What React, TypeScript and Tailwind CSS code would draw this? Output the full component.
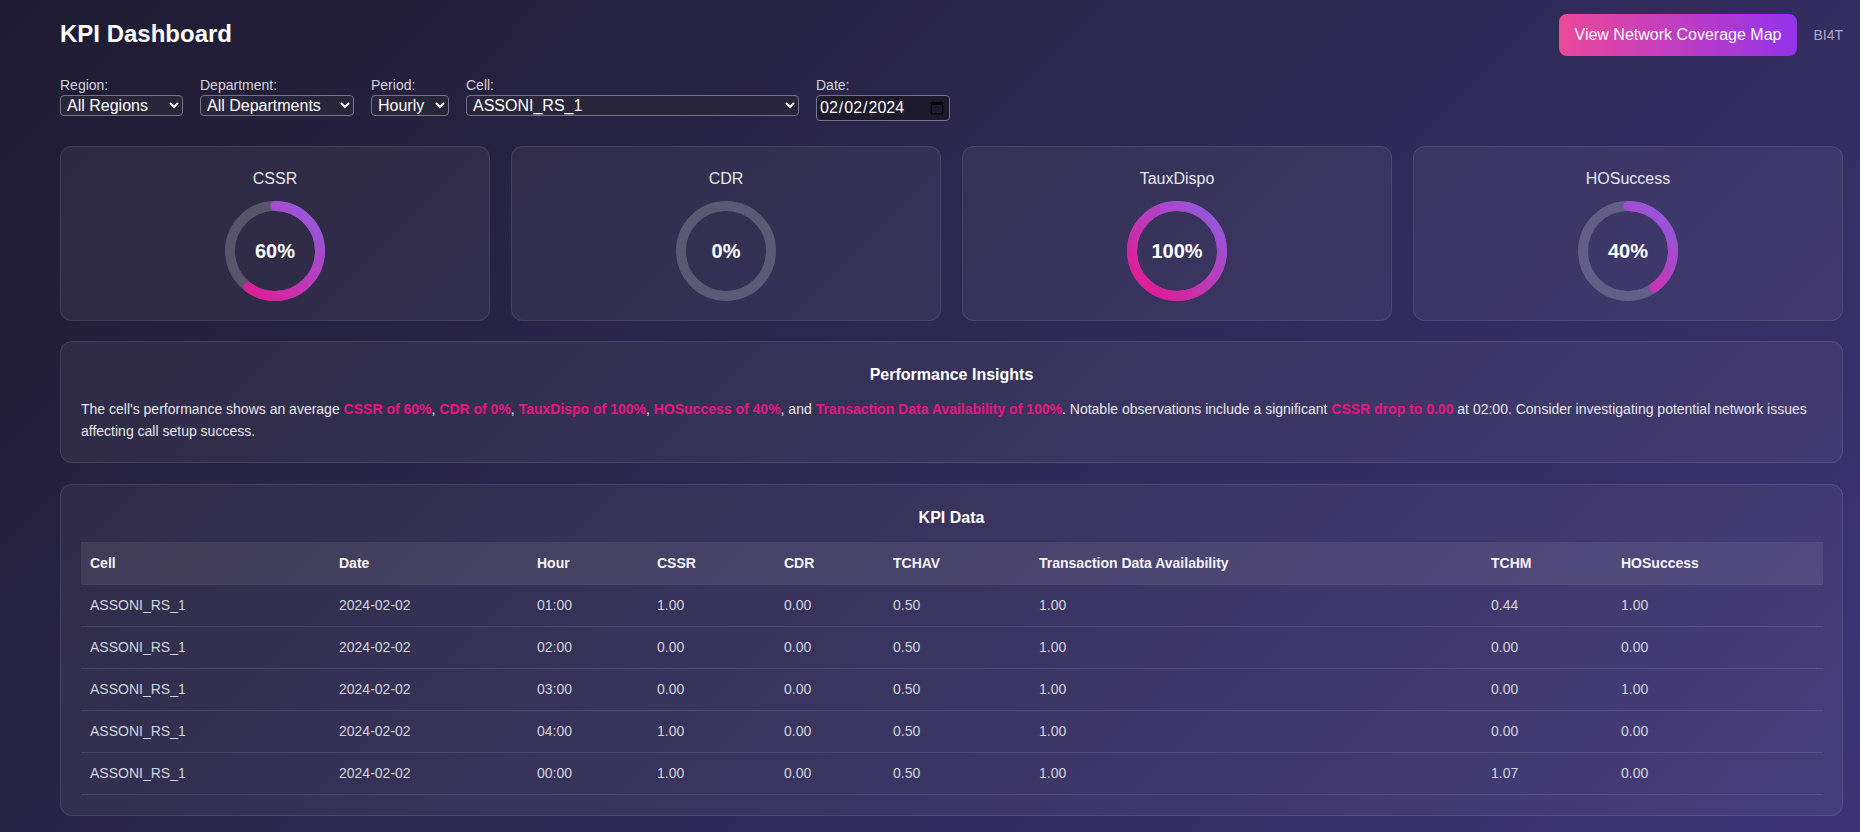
import { useState } from 'react';

const filters = [
  { label: 'Region:', value: 'All Regions', options: ['All Regions'], width: 'w-[123px]' },
  { label: 'Department:', value: 'All Departments', options: ['All Departments'], width: 'w-[154px]' },
  { label: 'Period:', value: 'Hourly', options: ['Hourly', 'Daily'], width: 'w-[78px]' },
  { label: 'Cell:', value: 'ASSONI_RS_1', options: ['ASSONI_RS_1'], width: 'w-[333px]' },
];

const gauges = [
  { name: 'CSSR', value: 60 },
  { name: 'CDR', value: 0 },
  { name: 'TauxDispo', value: 100 },
  { name: 'HOSuccess', value: 40 },
];

const columns = [
  { name: 'Cell', width: 'w-[249px]' },
  { name: 'Date', width: 'w-[198px]' },
  { name: 'Hour', width: 'w-[120px]' },
  { name: 'CSSR', width: 'w-[127px]' },
  { name: 'CDR', width: 'w-[109px]' },
  { name: 'TCHAV', width: 'w-[146px]' },
  { name: 'Transaction Data Availability', width: 'w-[452px]' },
  { name: 'TCHM', width: 'w-[130px]' },
  { name: 'HOSuccess', width: 'w-[211px]' },
];

const rows = [
  ['01:00', '1.00', '0.00', '0.50', '1.00', '0.44', '1.00'],
  ['02:00', '0.00', '0.00', '0.50', '1.00', '0.00', '0.00'],
  ['03:00', '0.00', '0.00', '0.50', '1.00', '0.00', '1.00'],
  ['04:00', '1.00', '0.00', '0.50', '1.00', '0.00', '0.00'],
  ['00:00', '1.00', '0.00', '0.50', '1.00', '1.07', '0.00'],
];

const Gauge = ({ name, value }: { name: string; value: number }) => {
  const r = 45;
  const c = 2 * Math.PI * r;
  const id = `grad-${name}`;

  return (
    <div className="h-[175px] rounded-xl border border-white/10 bg-white/[0.05] flex flex-col items-center pt-[23px]">
      <h3 className="text-base leading-[18px] text-gray-200">{name}</h3>
      <div className="relative mt-[13px] size-[100px]">
        <svg width="100" height="100" viewBox="0 0 100 100">
          <defs>
            <linearGradient id={id} x1="0%" y1="0%" x2="100%" y2="100%">
              <stop offset="0%" stopColor="#ec148a" />
              <stop offset="100%" stopColor="#8d5ee6" />
            </linearGradient>
          </defs>
          <circle cx="50" cy="50" r={r} fill="none" stroke="rgba(255,255,255,0.2)" strokeWidth="10" />
          {value > 0 && (
            <circle
              cx="50"
              cy="50"
              r={r}
              fill="none"
              stroke={`url(#${id})`}
              strokeWidth="10"
              strokeLinecap="round"
              strokeDasharray={`${(c * value) / 100} ${c}`}
              transform="rotate(-90 50 50)"
            />
          )}
        </svg>
        <div className="absolute inset-0 flex items-center justify-center text-xl font-bold">{value}%</div>
      </div>
    </div>
  );
};

const Hl = ({ children }: { children: React.ReactNode }) => (
  <span className="font-bold text-[#e8167f]">{children}</span>
);

export default function App() {
  const [date, setDate] = useState('2024-02-02');

  return (
    <div className="min-h-screen w-full bg-[linear-gradient(135deg,#1f1b31_0%,#2e2953_50%,#3d3376_100%)] font-['Liberation_Sans',Arial,sans-serif] text-white pl-[60px] pr-[17px] pt-[14px] pb-[16px]">
      <header className="h-[42px] flex items-center justify-between">
        <h1 className="text-2xl font-bold -mt-[2px]">KPI Dashboard</h1>
        <div className="flex items-center gap-4">
          <button className="h-[42px] px-4 rounded-lg text-base bg-[linear-gradient(to_right,#ec4899,#9333ea)]">
            View Network Coverage Map
          </button>
          <span className="text-sm text-[#aeaac4]">BI4T</span>
        </div>
      </header>

      <div className="mt-5 flex items-start gap-[17px]">
        {filters.map((f) => (
          <div key={f.label} className="flex flex-col">
            <label className="text-sm leading-[19px] text-gray-300">{f.label}</label>
            <select
              defaultValue={f.value}
              className={`${f.width} h-[21px] px-[2px] text-base rounded-[4px] border border-[#77738b] bg-[#29263b] text-white`}
            >
              {f.options.map((o) => (
                <option key={o}>{o}</option>
              ))}
            </select>
          </div>
        ))}
        <div className="flex flex-col">
          <label className="text-sm leading-[19px] text-gray-300">Date:</label>
          <input
            type="date"
            value={date}
            onChange={(e) => setDate(e.target.value)}
            className="w-[134px] h-[26px] px-[2px] text-base rounded-[4px] border border-[#77738b] bg-[#1d1a2b] text-white"
          />
        </div>
      </div>

      <div className="mt-[25px] grid grid-cols-4 gap-[21px]">
        {gauges.map((g) => (
          <Gauge key={g.name} {...g} />
        ))}
      </div>

      <section className="mt-[20px] rounded-xl border border-white/10 bg-white/[0.05] px-5 pt-[21px] pb-5">
        <h2 className="text-center text-base font-bold leading-6 mb-[11px]">Performance Insights</h2>
        <p className="text-sm leading-[22px] text-gray-200">
          The cell's performance shows an average <Hl>CSSR of 60%</Hl>, <Hl>CDR of 0%</Hl>, <Hl>TauxDispo of 100%</Hl>,{' '}
          <Hl>HOSuccess of 40%</Hl>, and <Hl>Transaction Data Availability of 100%</Hl>. Notable observations include a
          significant <Hl>CSSR drop to 0.00</Hl> at 02:00. Consider investigating potential network issues affecting
          call setup success.
        </p>
      </section>

      <section className="mt-[21px] rounded-xl border border-white/10 bg-white/[0.05] px-5 pt-[21px] pb-5">
        <h2 className="text-center text-base font-bold leading-6 mb-3">KPI Data</h2>
        <table className="w-full table-fixed text-sm">
          <thead>
            <tr className="h-[42px] bg-white/[0.08] border-b border-white/10">
              {columns.map((c) => (
                <th key={c.name} className={`${c.width} pl-[9px] text-left font-bold text-gray-100`}>
                  {c.name}
                </th>
              ))}
            </tr>
          </thead>
          <tbody>
            {rows.map((r) => (
              <tr key={r[0]} className="h-[42px] border-b border-white/10 text-gray-300">
                <td className="pl-[9px]">ASSONI_RS_1</td>
                <td className="pl-[9px]">2024-02-02</td>
                {r.map((v, i) => (
                  <td key={i} className="pl-[9px]">
                    {v}
                  </td>
                ))}
              </tr>
            ))}
          </tbody>
        </table>
      </section>
    </div>
  );
}
